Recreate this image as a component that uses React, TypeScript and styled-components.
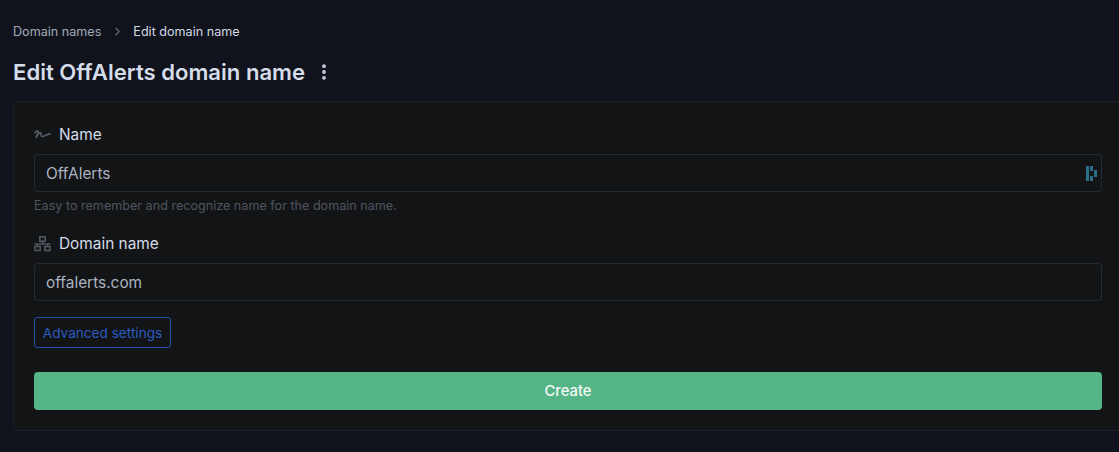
import { createGlobalStyle, styled } from "styled-components";
import { ChevronRight, EllipsisVertical } from "lucide-react";

const GlobalStyle = createGlobalStyle`
  html, body {
    margin: 0;
    padding: 0;
    background: #10131b;
    overflow: hidden;
  }
  * {
    box-sizing: border-box;
  }
`;

const Page = styled.div`
  width: 1119px;
  height: 452px;
  overflow: hidden;
  background: #10131b;
  padding: 23px 0 0 13px;
  font-family: Inter, "Noto Sans", sans-serif;
`;

const Breadcrumbs = styled.nav`
  display: flex;
  align-items: center;
  height: 17px;
  font-size: 12.6px;
  line-height: 17px;
`;

const Crumb = styled.span<{ $active?: boolean }>`
  color: ${(p) => (p.$active ? "#d3dae6" : "#a0aab9")};
`;

const Separator = styled.span`
  display: flex;
  align-items: center;
  justify-content: center;
  width: 32px;
  color: #5d6471;
`;

const TitleRow = styled.div`
  display: flex;
  align-items: center;
  gap: 9px;
  height: 28px;
  margin-top: 18px;
`;

const Title = styled.h1`
  margin: 0;
  font-size: 22.1px;
  line-height: 28px;
  font-weight: 600;
  color: #d5dcea;
`;

const MoreButton = styled.span`
  display: flex;
  color: #c9d1df;
`;

const Card = styled.form`
  width: 1110px;
  height: 330px;
  margin-top: 15px;
  padding: 20px;
  background: #131416;
  border: 1px solid #1b1f28;
  border-radius: 4px;
`;

const Field = styled.div<{ $gap?: number }>`
  margin-bottom: ${(p) => p.$gap ?? 0}px;
`;

const Label = styled.label`
  display: flex;
  align-items: center;
  gap: 8px;
  height: 24px;
  font-size: 15.4px;
  font-weight: 400;
  color: #d5dcea;
`;

const LabelIcon = styled.svg`
  width: 17px;
  height: 17px;
  flex: none;
  color: #50555f;
`;

const InputBox = styled.div`
  display: flex;
  align-items: center;
  justify-content: space-between;
  height: 38px;
  margin-top: 8px;
  padding: 0 4px 0 11px;
  border: 1px solid #262a35;
  border-radius: 4px;
  font-size: 15.4px;
  color: #aab3c3;
`;

const Hint = styled.p`
  margin: 6px 0 0;
  font-size: 12.6px;
  line-height: 15px;
  color: #4f5560;
`;

const OutlineButton = styled.button`
  display: block;
  width: 137px;
  height: 31px;
  margin: 16px 0 24px;
  padding: 0;
  background: transparent;
  border: 1px solid #2350a8;
  border-radius: 3px;
  color: #2a5cc0;
  font-family: inherit;
  font-size: 13.6px;
`;

const SubmitButton = styled.button`
  display: block;
  width: 100%;
  height: 38px;
  background: #55b586;
  border: 0;
  border-radius: 4px;
  color: #f7faf8;
  font-family: inherit;
  font-size: 14.8px;
  font-weight: 500;
`;

const NameIcon = () => (
  <LabelIcon viewBox="0 0 17 17" fill="none" stroke="currentColor" strokeWidth="1.8" strokeLinecap="round" strokeLinejoin="round">
    <path d="M1 6.5 C2.5 4.5 4.5 4.5 4 6.5 L2 11.5 C4 8 6.5 5 7 7.5 C7.3 9.5 7 11 9 10.5 C11 10 13 8 16 8" />
  </LabelIcon>
);

const SitemapIcon = () => (
  <LabelIcon viewBox="0 0 17 17" fill="none" stroke="currentColor" strokeWidth="1.6">
    <rect x="5.8" y="1.8" width="5.4" height="4.4" />
    <rect x="1" y="11.5" width="5.2" height="4" />
    <rect x="10.8" y="11.5" width="5.2" height="4" />
    <path d="M8.5 6v3M0.5 9h16M3.5 9v2.5M13.5 9v2.5" />
  </LabelIcon>
);

const PasswordManagerIcon = () => (
  <svg width="11" height="15" viewBox="0 0 11 15" fill="#2a6f8a">
    <rect x="0" y="0" width="3" height="15" />
    <rect x="4" y="0" width="3" height="5" />
    <rect x="4" y="10" width="3" height="5" />
    <rect x="8" y="4" width="3" height="7" />
  </svg>
);

export default function App() {
  return (
    <Page>
      <GlobalStyle />
      <Breadcrumbs>
        <Crumb>Domain names</Crumb>
        <Separator>
          <ChevronRight size={13} strokeWidth={2.5} />
        </Separator>
        <Crumb $active>Edit domain name</Crumb>
      </Breadcrumbs>
      <TitleRow>
        <Title>Edit OffAlerts domain name</Title>
        <MoreButton>
          <EllipsisVertical size={20} strokeWidth={2.6} />
        </MoreButton>
      </TitleRow>
      <Card>
        <Field $gap={18}>
          <Label>
            <NameIcon />
            Name
          </Label>
          <InputBox>
            OffAlerts
            <PasswordManagerIcon />
          </InputBox>
          <Hint>Easy to remember and recognize name for the domain name.</Hint>
        </Field>
        <Field>
          <Label>
            <SitemapIcon />
            Domain name
          </Label>
          <InputBox>offalerts.com</InputBox>
        </Field>
        <OutlineButton type="button">Advanced settings</OutlineButton>
        <SubmitButton type="button">Create</SubmitButton>
      </Card>
    </Page>
  );
}
